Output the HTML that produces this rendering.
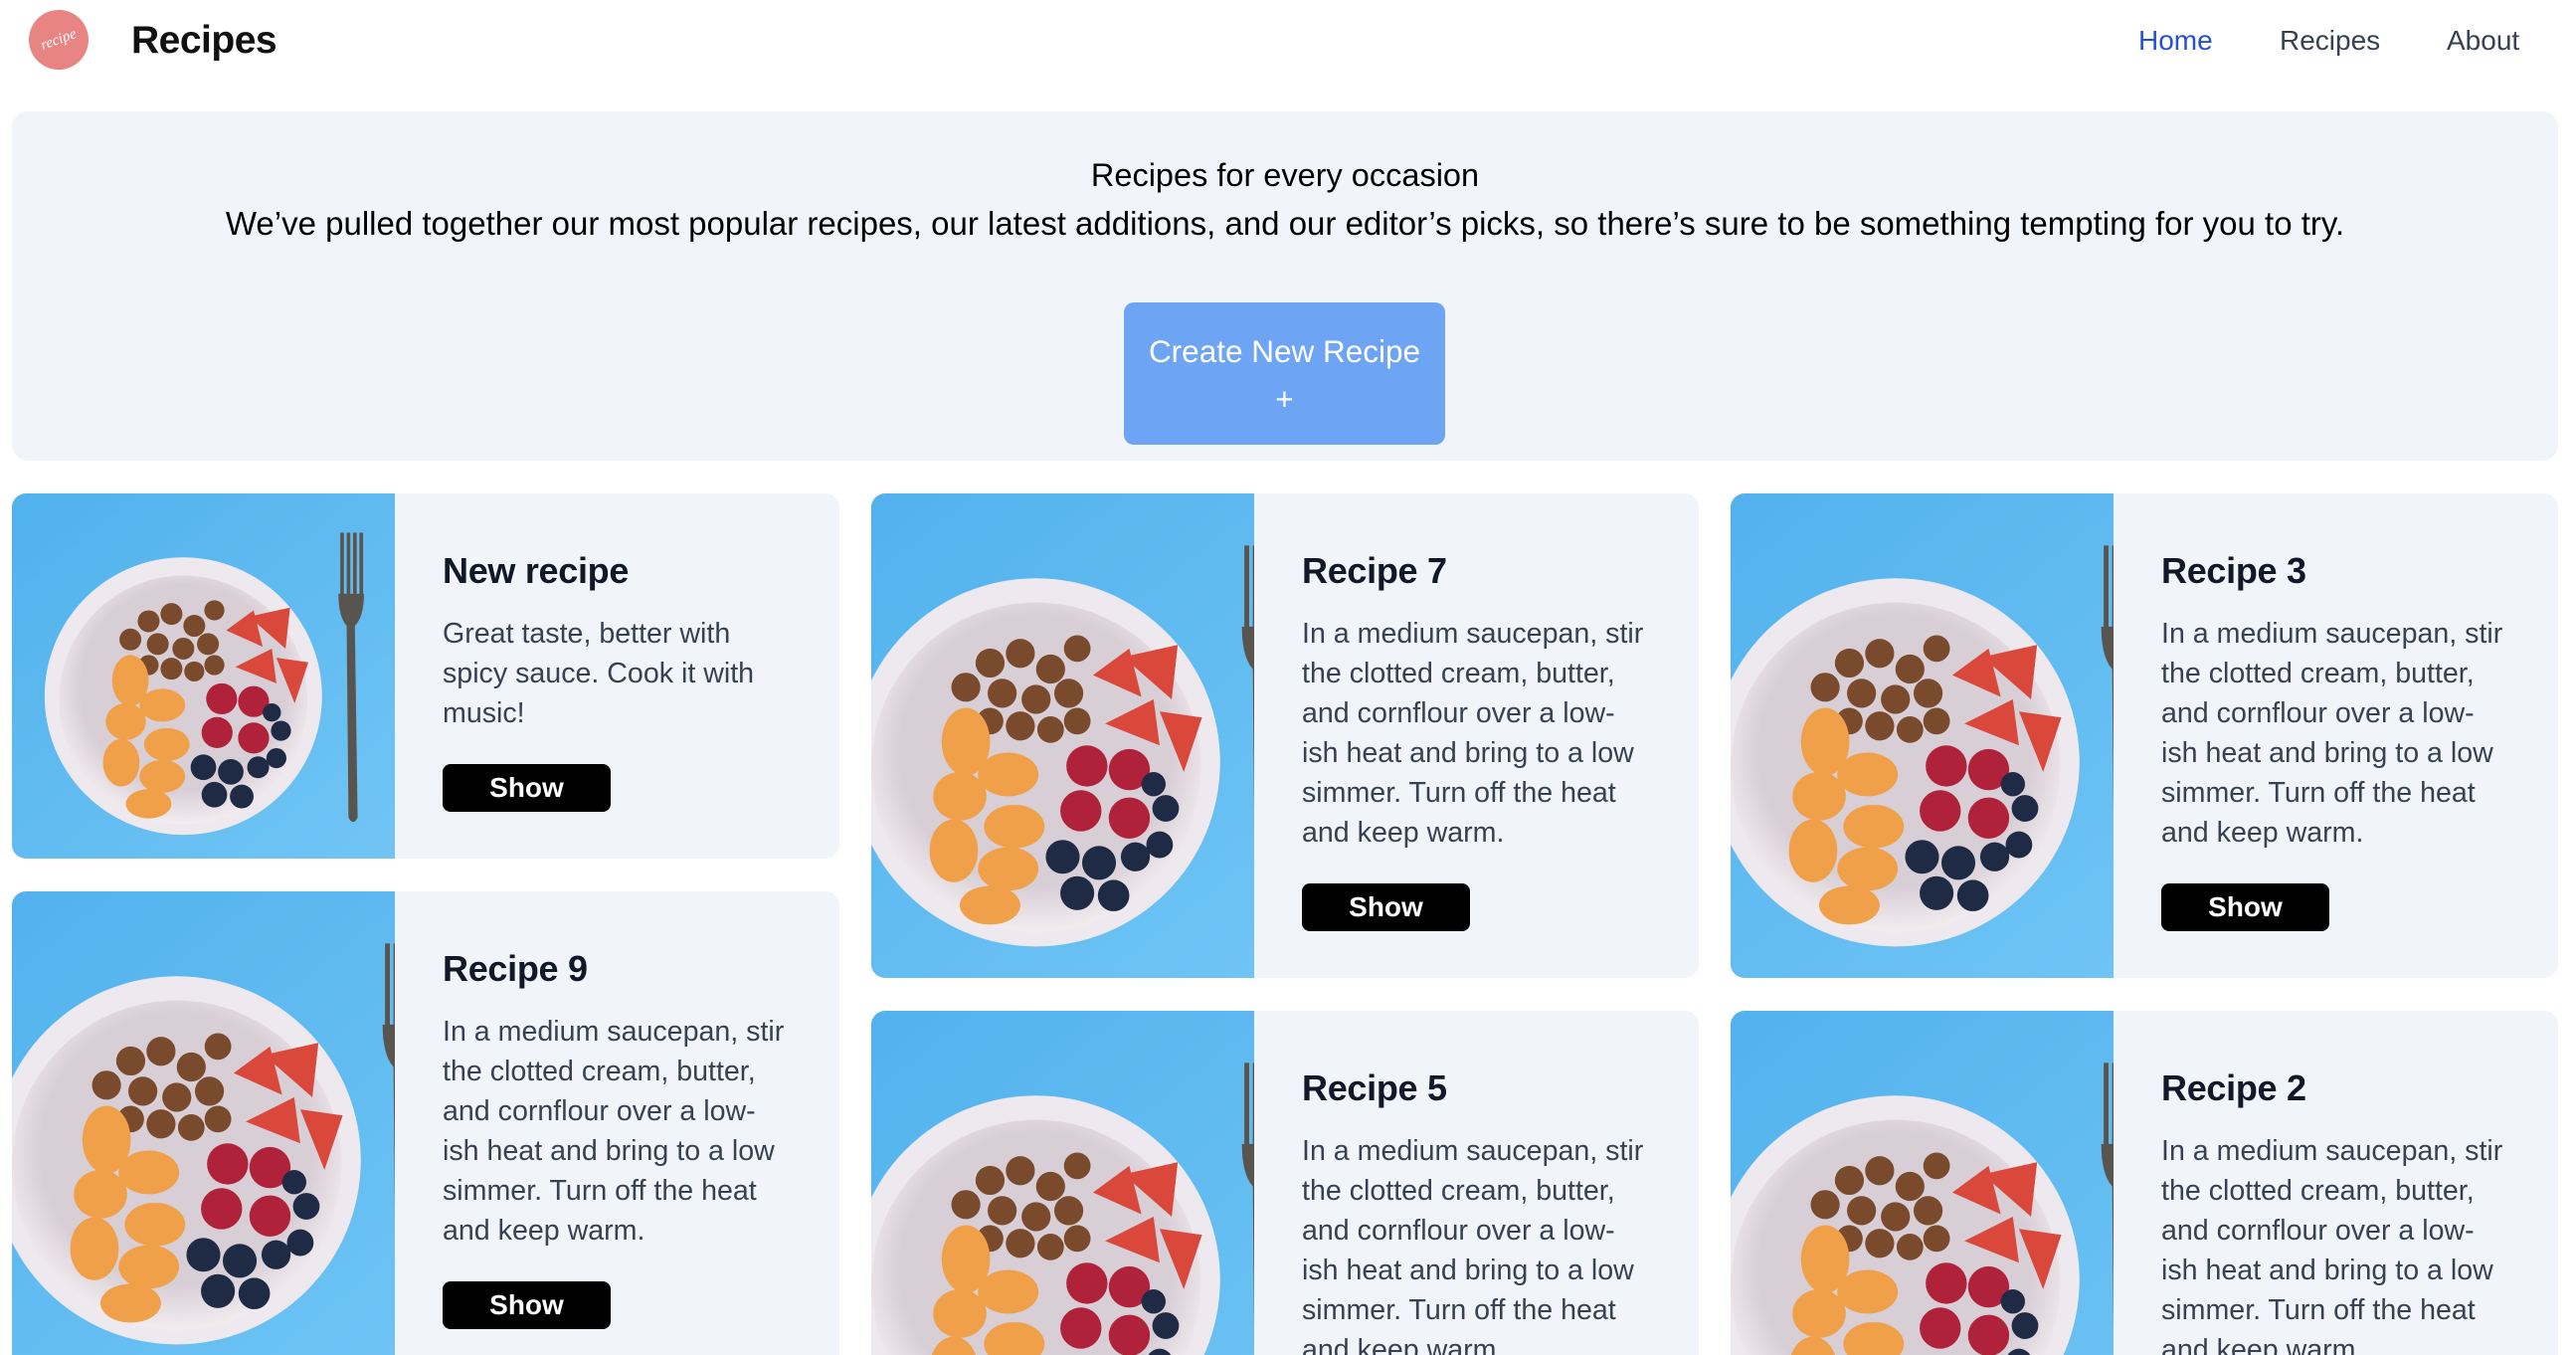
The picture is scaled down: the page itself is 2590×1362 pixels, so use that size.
<!DOCTYPE html>
<html><head><meta charset="utf-8"><style>
*{box-sizing:border-box;margin:0;padding:0}
html,body{width:2590px;height:1362px;overflow:hidden;background:#fff;font-family:"Liberation Sans",Arial,sans-serif}
#wrap{position:relative;width:2590px;height:1362px;overflow:hidden}
.logo{position:absolute;left:29px;top:10px;width:60px;height:60px;border-radius:50%;background:#e88582;color:#fff;font:italic 15px "Liberation Serif",serif;display:flex;align-items:center;justify-content:center;transform:rotate(-20deg)}
.brand{position:absolute;left:132px;top:19px;font-size:39px;font-weight:bold;color:#111;letter-spacing:-0.5px}
.nav{position:absolute;top:25px;font-size:28px;color:#374151}
.hero{position:absolute;left:12px;top:112px;width:2560px;height:351px;background:#f1f4f9;border-radius:16px;text-align:center;color:#000}
.hero .l1{position:absolute;top:46px;width:100%;font-size:32.5px}
.hero .l2{position:absolute;top:94px;width:100%;font-size:33px}
.btn{position:absolute;left:1118px;top:192px;width:323px;height:143px;background:#6ea4f4;border-radius:10px;color:#fff;font-size:31.5px;line-height:48px;padding-top:25px}
.card{position:absolute;width:832px;background:#f1f4f9;border-radius:14px;overflow:hidden}
.card svg{position:absolute;left:0;top:0;width:385px;height:487px}
.card.s svg{height:367px}
.txt{position:absolute;left:433px;top:48px;white-space:nowrap}
.txt h2{font-size:36px;font-weight:bold;color:#111827;line-height:60px;letter-spacing:-0.3px}
.txt p{margin-top:13px;font-size:28.6px;line-height:40px;color:#374151}
.show{margin-top:31px;width:169px;height:48px;background:#000;border-radius:8px;color:#fff;font-size:28px;font-weight:bold;text-align:center;line-height:48px}
</style></head><body><div id="wrap">
<svg width="0" height="0" style="position:absolute"><defs>
<linearGradient id="bg" x1="0" y1="0" x2="1" y2="1"><stop offset="0" stop-color="#4fb0ec"/><stop offset="1" stop-color="#72c6f5"/></linearGradient>
<radialGradient id="pl" cx="0.5" cy="0.45" r="0.55"><stop offset="0.75" stop-color="#d8cfd6"/><stop offset="1" stop-color="#f2ecef"/></radialGradient>
<symbol id="img" viewBox="0 0 500 400" preserveAspectRatio="xMidYMid slice">
<rect width="500" height="400" fill="url(#bg)"/>
<circle cx="228" cy="222" r="152" fill="#eee9ee"/>
<circle cx="228" cy="226" r="136" fill="url(#pl)"/>
<g fill="#7a4a2c"><circle cx="190" cy="140" r="12"/><circle cx="215" cy="132" r="12"/><circle cx="240" cy="145" r="12"/><circle cx="262" cy="128" r="11"/><circle cx="170" cy="160" r="12"/><circle cx="200" cy="165" r="12"/><circle cx="228" cy="170" r="12"/><circle cx="255" cy="165" r="12"/><circle cx="215" cy="192" r="12"/><circle cx="240" cy="195" r="11"/><circle cx="262" cy="188" r="11"/><circle cx="190" cy="188" r="11"/></g>
<g fill="#d9483b"><path d="M275 150 l30 -22 l10 40 z"/><path d="M300 135 l45 -10 l-5 45 z"/><path d="M285 190 l40 -20 l5 38 z"/><path d="M330 180 l35 5 l-15 45 z"/></g>
<g fill="#b0213a"><circle cx="270" cy="225" r="17"/><circle cx="305" cy="228" r="17"/><circle cx="265" cy="262" r="17"/><circle cx="305" cy="268" r="17"/></g>
<g fill="#1f2a44"><circle cx="250" cy="300" r="14"/><circle cx="280" cy="305" r="14"/><circle cx="310" cy="300" r="12"/><circle cx="262" cy="330" r="14"/><circle cx="292" cy="332" r="13"/><circle cx="335" cy="260" r="11"/><circle cx="330" cy="290" r="11"/><circle cx="325" cy="240" r="10"/></g>
<g fill="#f0a048"><ellipse cx="170" cy="205" rx="20" ry="28"/><ellipse cx="205" cy="232" rx="25" ry="18"/><ellipse cx="165" cy="250" rx="22" ry="20"/><ellipse cx="210" cy="275" rx="25" ry="18"/><ellipse cx="160" cy="295" rx="20" ry="26"/><ellipse cx="205" cy="310" rx="25" ry="18"/><ellipse cx="190" cy="340" rx="25" ry="16"/></g>
<g fill="#5a544f"><rect x="400" y="43" width="4" height="70"/><rect x="407" y="43" width="4" height="70"/><rect x="414" y="43" width="4" height="70"/><rect x="421" y="43" width="4" height="70"/><path d="M398 110 h28 q0 25 -10 35 l3 210 q-5 10 -10 0 l-2 -210 q-9 -10 -9 -35z"/></g>
</symbol></defs></svg>

<div class="logo">recipe</div>
<div class="brand">Recipes</div>
<div class="nav" style="left:2150px;color:#2451d2">Home</div>
<div class="nav" style="left:2292px">Recipes</div>
<div class="nav" style="left:2460px">About</div>

<div class="hero">
<div class="l1">Recipes for every occasion</div>
<div class="l2">We’ve pulled together our most popular recipes, our latest additions, and our editor’s picks, so there’s sure to be something tempting for you to try.</div>
<div class="btn">Create New Recipe<br>+</div>
</div>

<div class="card s" style="left:12px;top:496px;height:367px"><svg><use href="#img"/></svg>
<div class="txt"><h2>New recipe</h2><p>Great taste, better with<br>spicy sauce. Cook it with<br>music!</p><div class="show">Show</div></div></div>

<div class="card" style="left:876px;top:496px;height:487px"><svg><use href="#img"/></svg>
<div class="txt"><h2>Recipe 7</h2><p>In a medium saucepan, stir<br>the clotted cream, butter,<br>and cornflour over a low-<br>ish heat and bring to a low<br>simmer. Turn off the heat<br>and keep warm.</p><div class="show">Show</div></div></div>

<div class="card" style="left:1740px;top:496px;height:487px"><svg><use href="#img"/></svg>
<div class="txt"><h2>Recipe 3</h2><p>In a medium saucepan, stir<br>the clotted cream, butter,<br>and cornflour over a low-<br>ish heat and bring to a low<br>simmer. Turn off the heat<br>and keep warm.</p><div class="show">Show</div></div></div>

<div class="card" style="left:12px;top:896px;height:466px;border-bottom-left-radius:0;border-bottom-right-radius:0"><svg><use href="#img"/></svg>
<div class="txt"><h2>Recipe 9</h2><p>In a medium saucepan, stir<br>the clotted cream, butter,<br>and cornflour over a low-<br>ish heat and bring to a low<br>simmer. Turn off the heat<br>and keep warm.</p><div class="show">Show</div></div></div>

<div class="card" style="left:876px;top:1016px;height:346px;border-bottom-left-radius:0;border-bottom-right-radius:0"><svg><use href="#img"/></svg>
<div class="txt"><h2>Recipe 5</h2><p>In a medium saucepan, stir<br>the clotted cream, butter,<br>and cornflour over a low-<br>ish heat and bring to a low<br>simmer. Turn off the heat<br>and keep warm.</p></div></div>

<div class="card" style="left:1740px;top:1016px;height:346px;border-bottom-left-radius:0;border-bottom-right-radius:0"><svg><use href="#img"/></svg>
<div class="txt"><h2>Recipe 2</h2><p>In a medium saucepan, stir<br>the clotted cream, butter,<br>and cornflour over a low-<br>ish heat and bring to a low<br>simmer. Turn off the heat<br>and keep warm.</p></div></div>
</div></body></html>
